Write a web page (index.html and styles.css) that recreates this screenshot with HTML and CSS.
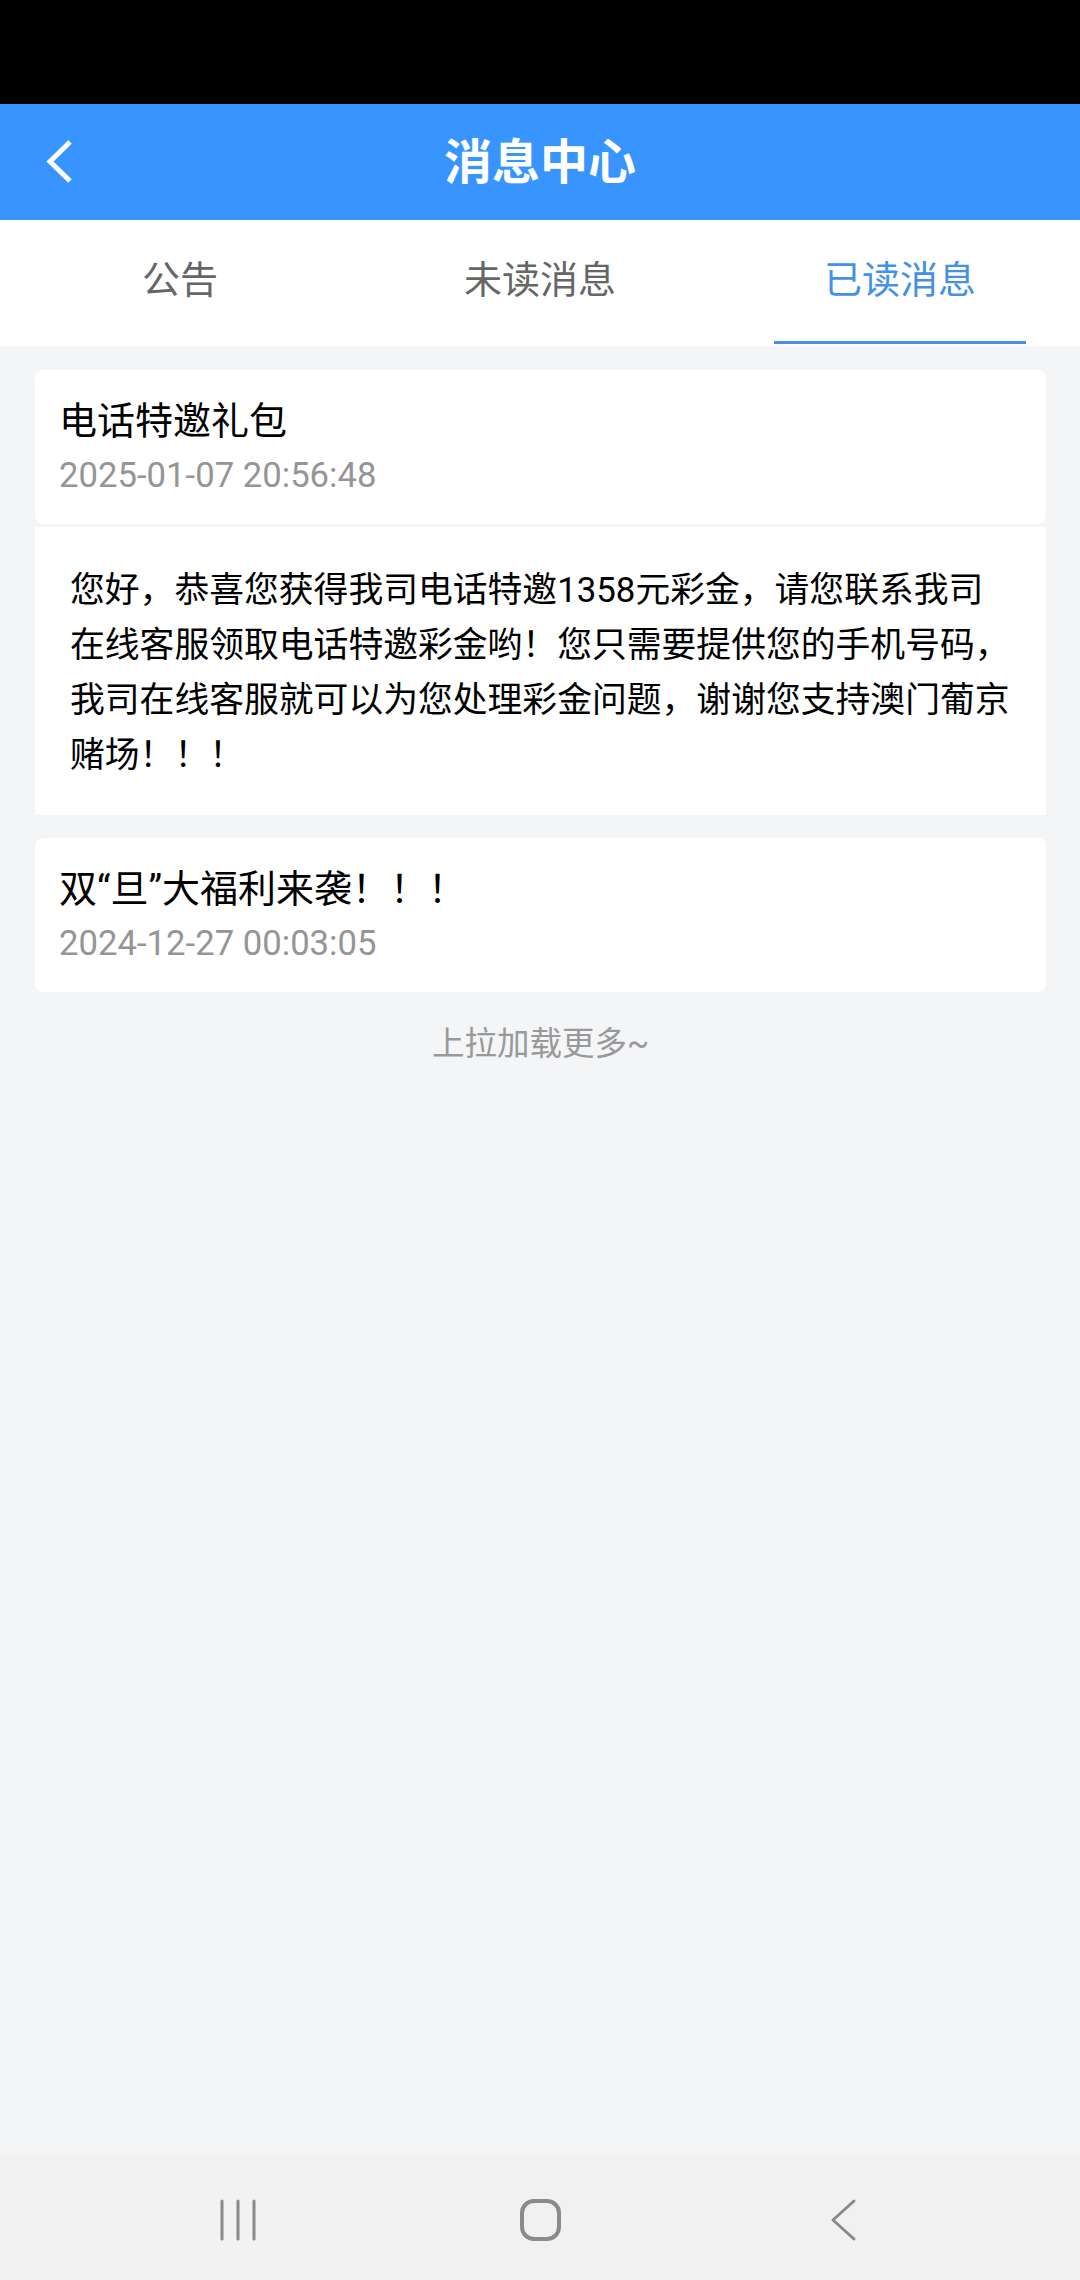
FILE: index.html
```html
<!DOCTYPE html>
<html lang="zh-CN">
<head>
<meta charset="utf-8">
<title>消息中心</title>
<link rel="stylesheet" href="styles.css">
</head>
<body>
<div class="screen">
  <div class="statusbar"></div>
  <header class="appbar">
    <div class="appbar-left">
      <svg class="back" viewBox="0 0 32 48" width="32" height="48"><path d="M28 4 L8 23.5 L28 43" fill="none" stroke="#fff" stroke-width="5"/></svg>
    </div>
    <h1 class="appbar-title">消息中心</h1>
    <div class="appbar-right"></div>
  </header>
  <nav class="tabs">
    <div class="tab"><span class="tab-label">公告</span><span class="tab-line"></span></div>
    <div class="tab"><span class="tab-label">未读消息</span><span class="tab-line"></span></div>
    <div class="tab active"><span class="tab-label">已读消息</span><span class="tab-line"></span></div>
  </nav>
  <main class="list">
    <section class="msg">
      <div class="msg-head">
        <div class="msg-title">电话特邀礼包</div>
        <div class="msg-time">2025-01-07 20:56:48</div>
      </div>
      <div class="msg-body">您好，恭喜您获得我司电话特邀1358元彩金，请您联系我司在线客服领取电话特邀彩金哟！您只需要提供您的手机号码，我司在线客服就可以为您处理彩金问题，谢谢您支持澳门葡京赌场！！！</div>
    </section>
    <section class="msg">
      <div class="msg-head">
        <div class="msg-title">双“旦”大福利来袭！！！</div>
        <div class="msg-time">2024-12-27 00:03:05</div>
      </div>
    </section>
    <div class="more">上拉加载更多~</div>
  </main>
  <footer class="navbar">
    <div class="nav-slot">
      <svg viewBox="0 0 60 44" width="60" height="44"><g stroke="#8a8a8a" stroke-width="3" stroke-linecap="round"><line x1="14" y1="3" x2="14" y2="41"/><line x1="30" y1="3" x2="30" y2="41"/><line x1="46" y1="3" x2="46" y2="41"/></g></svg>
    </div>
    <div class="nav-slot">
      <svg viewBox="0 0 60 44" width="60" height="44"><rect x="12" y="3" width="37" height="38" rx="12" fill="none" stroke="#8a8a8a" stroke-width="4"/></svg>
    </div>
    <div class="nav-slot">
      <svg viewBox="0 0 60 44" width="60" height="44"><path d="M42 3 L21 22 L42 41" fill="none" stroke="#8a8a8a" stroke-width="3" stroke-linecap="round" stroke-linejoin="round"/></svg>
    </div>
  </footer>
</div>
</body>
</html>
```
FILE: styles.css
```css
html, body {
  margin: 0;
  padding: 0;
}
body {
  width: 1080px;
  height: 2280px;
  background: #f4f5f7;
  font-family: Roboto, "Noto Sans CJK SC", sans-serif;
}
.screen {
  display: flex;
  flex-direction: column;
  height: 2280px;
}
.statusbar {
  flex: none;
  height: 104px;
  background: #000;
}
.appbar {
  flex: none;
  height: 116px;
  background: #3894ff;
  display: grid;
  grid-template-columns: 1fr auto 1fr;
  align-items: center;
}
.appbar-left {
  display: flex;
  align-items: center;
  padding-left: 42px;
}
.back {
  display: block;
}
.appbar-title {
  margin: 0;
  padding-bottom: 9px;
  font-family: "Noto Sans CJK SC", sans-serif;
  font-weight: 700;
  font-size: 48px;
  line-height: 1;
  color: #fff;
}
.tabs {
  flex: none;
  height: 126px;
  background: #fff;
  display: grid;
  grid-template-columns: repeat(3, 1fr);
}
.tab {
  display: flex;
  flex-direction: column;
  align-items: center;
}
.tab-label {
  flex: 1;
  display: flex;
  align-items: center;
  padding-bottom: 9px;
  font-family: "Noto Sans CJK SC", sans-serif;
  font-size: 38px;
  color: #666;
}
.tab-line {
  width: 252px;
  height: 3px;
  margin-bottom: 2px;
  background: transparent;
}
.tab.active .tab-label {
  color: #4591e6;
}
.tab.active .tab-line {
  background: #4a8fe3;
}
.list {
  flex: 1;
  display: flex;
  flex-direction: column;
  padding: 24px 34px 0 35px;
}
.msg + .msg {
  margin-top: 23px;
}
.msg-head {
  box-sizing: border-box;
  height: 154px;
  padding: 26px 24px 0;
  background: #fff;
  border-radius: 8px;
}
.msg-title {
  font-size: 38px;
  line-height: 50px;
  color: #000;
}
.msg-time {
  margin-top: 4px;
  font-size: 34.7px;
  line-height: 50px;
  color: #959595;
}
.msg-body {
  margin-top: 3px;
  padding: 36px 32px 32px 35px;
  background: #fff;
  font-size: 34.8px;
  line-height: 55px;
  color: #000;
}
.more {
  margin-top: 27px;
  text-align: center;
  font-size: 32.5px;
  line-height: 50px;
  color: #999;
}
.navbar {
  flex: none;
  height: 127px;
  box-sizing: border-box;
  padding-top: 7px;
  background: #f1f1f1;
  display: flex;
  justify-content: center;
  align-items: center;
  gap: 242px;
}
.nav-slot {
  width: 60px;
  height: 44px;
}
.nav-slot svg {
  display: block;
}
```
